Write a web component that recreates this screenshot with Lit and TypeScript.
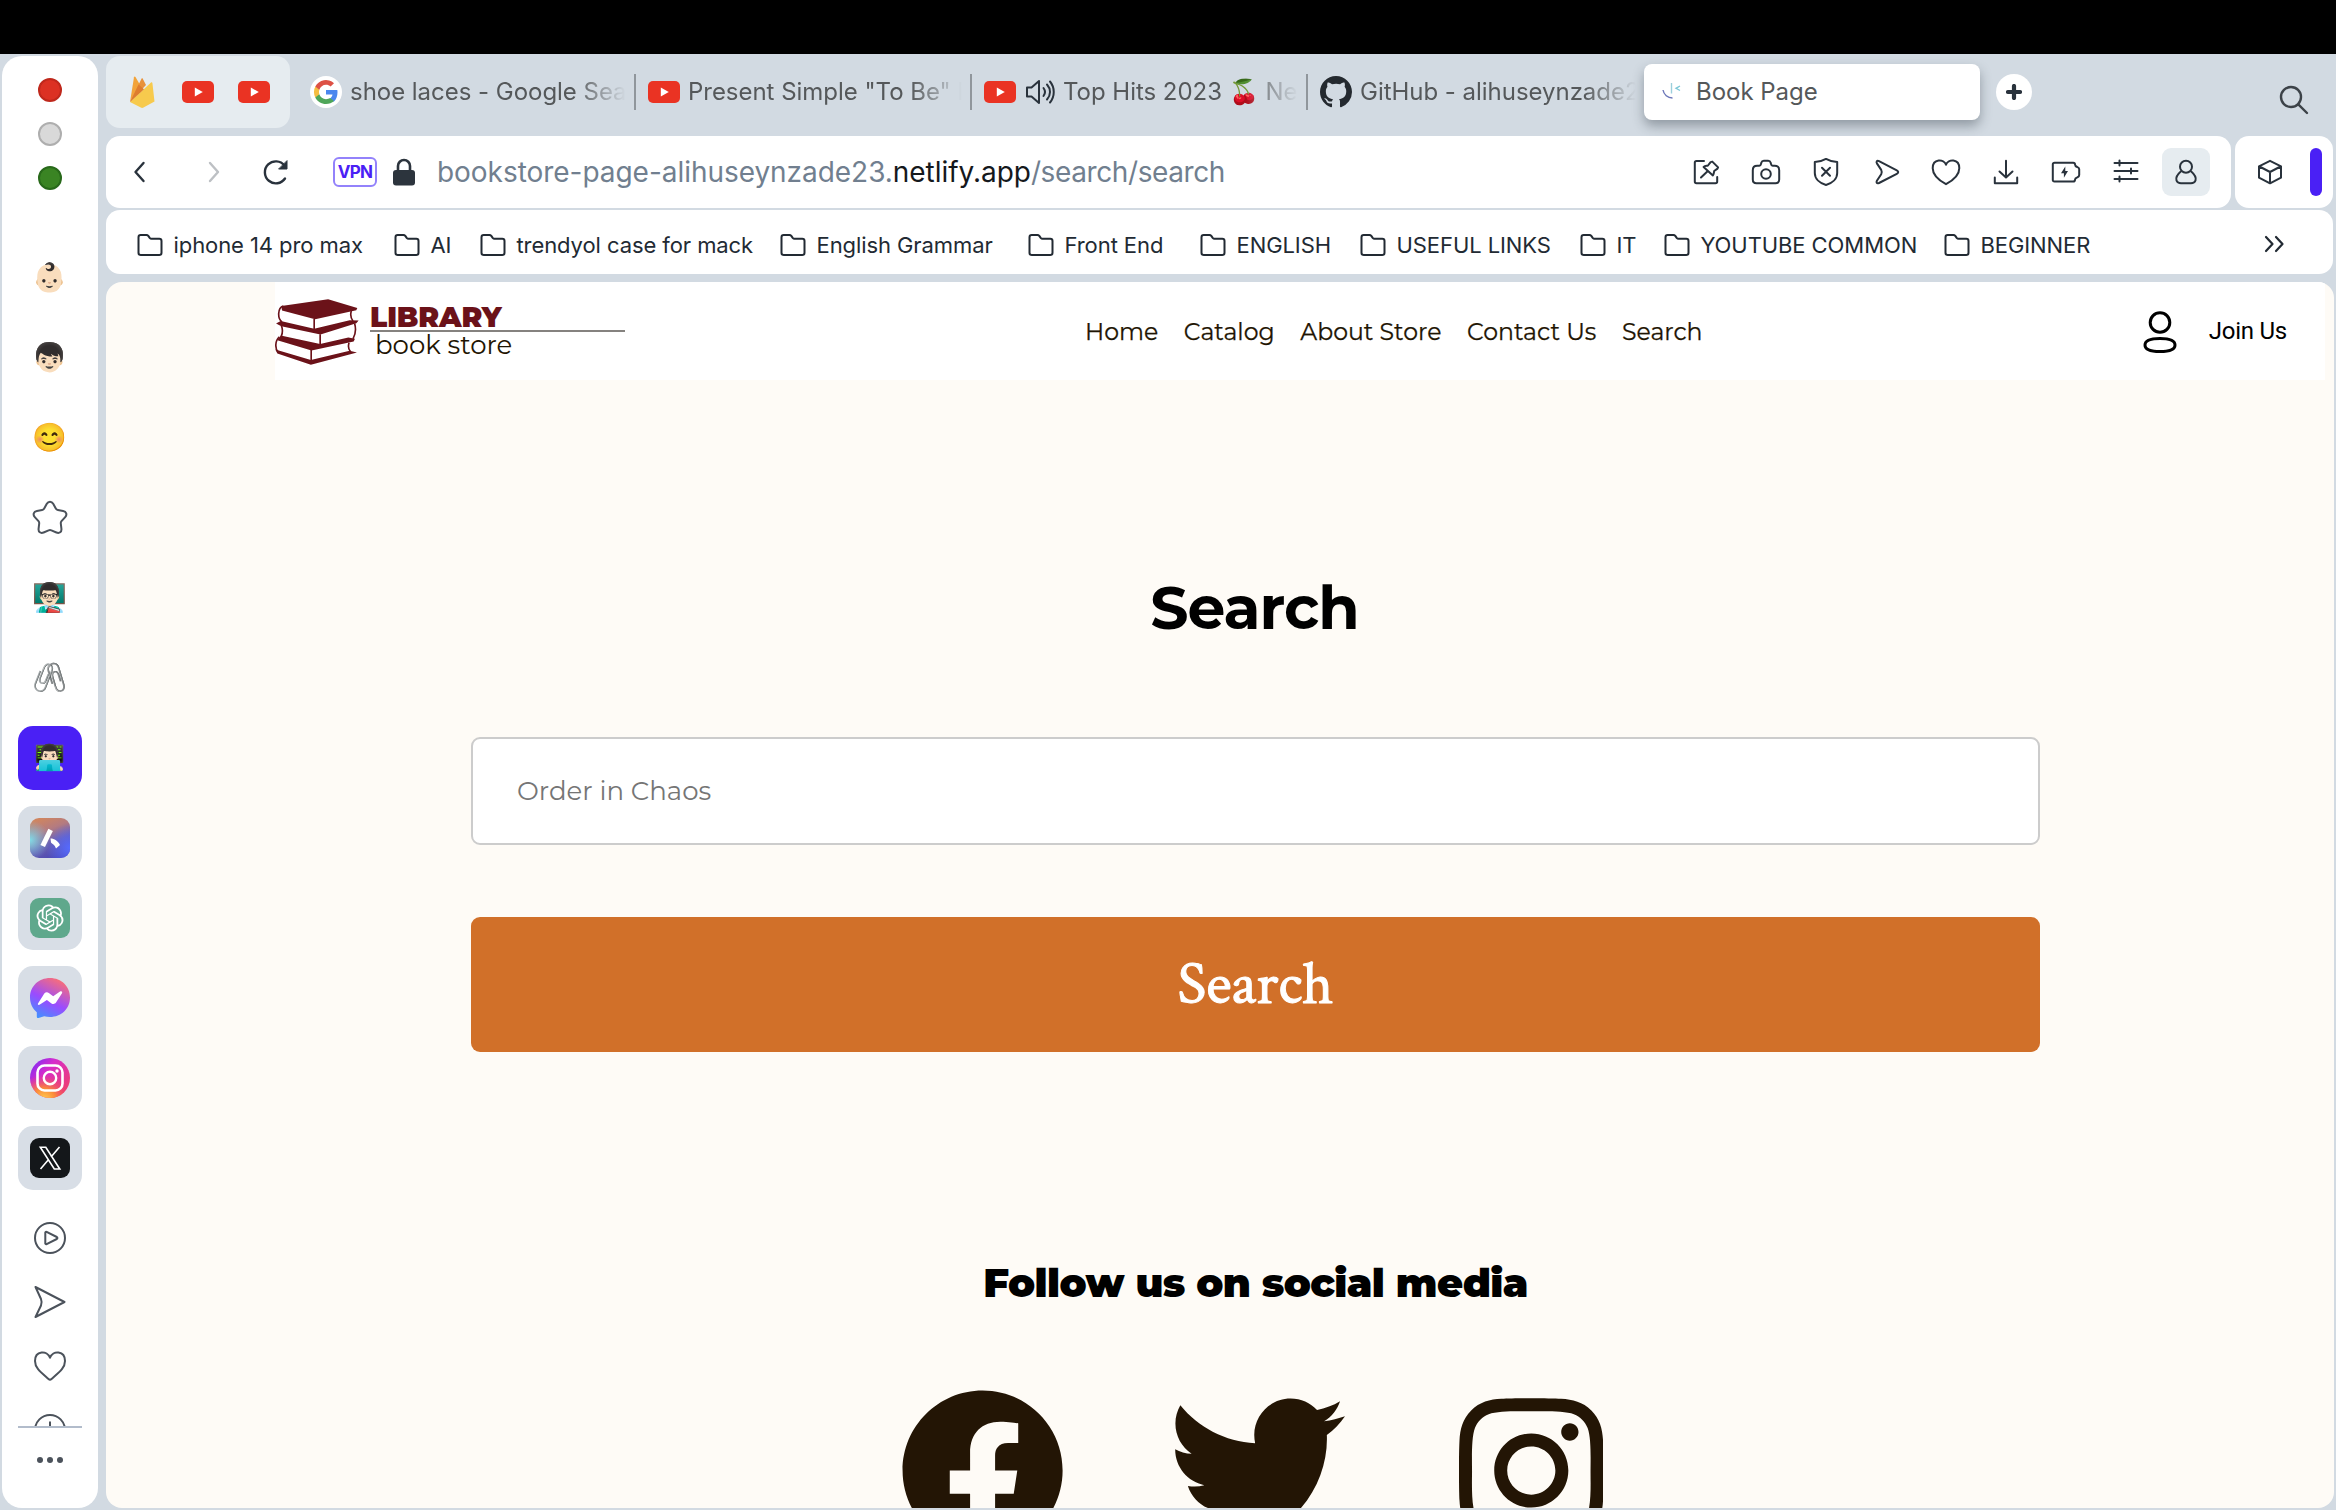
import { LitElement, html, css, svg } from 'lit';
import { customElement } from 'lit/decorators.js';
import { styleMap } from 'lit/directives/style-map.js';

const youtube = html`<svg class="yt" width="32" height="22" viewBox="0 0 32 22">
  <rect width="32" height="22" rx="5" fill="#ea3323" /><path d="M12.8 6.4v9.2L20.8 11z" fill="#fff" />
</svg>`;

const firebase = html`<svg width="26" height="32" viewBox="0 0 26 32">
  <path d="M1 26 5 1.2c.2-.9 1-.9 1.500-.2L10.500 8z" fill="#f2a33a" />
  <path d="M1 26 12.500 2.700c.3-.6 1-.6 1.300 0L17 9z" fill="#e8913a" />
  <path d="M1 26 22 6.600c.5-.5 1.300-.2 1.400.5L25.500 25.500 14.500 31.500c-.9.5-1.800.5-2.700 0z" fill="#f7ca4d" />
  <path d="M1 26 9.600 8.400 15 13.200z" fill="#de7c2e" />
</svg>`;

const google = html`<svg width="32" height="32" viewBox="0 0 32 32">
  <circle cx="16" cy="16" r="16" fill="#fff" />
  <g transform="translate(4 4)">
    <path d="M23.500 12.300c0-.9-.1-1.500-.2-2.300H12v4.500h6.500c-.3 1.600-1.200 3-2.500 3.900v3.200h4c2.300-2.200 3.500-5.400 3.500-9.300z" fill="#4b87ee" />
    <path d="M12 24c3.200 0 6-1.100 8-2.900l-4-3.100c-1 .7-2.400 1.200-4 1.200-3.100 0-5.700-2.100-6.700-4.900H1.300v3.100C3.300 21.300 7.300 24 12 24z" fill="#4fa65a" />
    <path d="M5.300 14.300a7.200 7.200 0 0 1 0-4.600V6.600H1.300a12 12 0 0 0 0 10.800z" fill="#f5bd42" />
    <path d="M12 4.800c1.800 0 3.300.6 4.600 1.800L20 3.200A12 12 0 0 0 1.300 6.600l4 3.100C6.300 6.900 8.900 4.800 12 4.800z" fill="#dd5145" />
  </g>
</svg>`;

const github = html`<svg width="32" height="32" viewBox="0 0 16 16" fill="#24292f">
  <path d="M8 0C3.580 0 0 3.580 0 8c0 3.540 2.290 6.530 5.470 7.590.4.070.55-.17.55-.38 0-.19-.01-.82-.01-1.490-2.010.37-2.530-.49-2.690-.94-.09-.23-.48-.94-.82-1.130-.28-.15-.68-.52-.01-.53.63-.01 1.080.58 1.230.82.72 1.210 1.870.87 2.330.66.07-.52.28-.87.51-1.070-1.780-.2-3.640-.89-3.640-3.950 0-.87.31-1.590.82-2.150-.08-.2-.36-1.020.08-2.120 0 0 .67-.21 2.200.82.64-.18 1.320-.27 2-.27s1.360.09 2 .27c1.530-1.040 2.200-.82 2.200-.82.44 1.100.16 1.920.08 2.120.51.56.82 1.270.82 2.150 0 3.070-1.870 3.750-3.650 3.950.29.25.54.73.54 1.480 0 1.070-.01 1.930-.01 2.200 0 .21.15.46.55.38A8.010 8.010 0 0 0 16 8c0-4.420-3.580-8-8-8z" />
</svg>`;

const speaker = html`<svg width="30" height="26" viewBox="0 0 30 26" fill="none" stroke="#29323c" stroke-width="2" stroke-linecap="round" stroke-linejoin="round">
  <path d="M2 8.500h4.500L14 2v22l-7.500-6.500H2zM18.500 9c1.800 2.400 1.800 5.600 0 8M22 5.500c4 4.500 4 10.500 0 15" /><path d="M25 2.500c5 6 5 15 0 21" />
</svg>`;

const favicon = html`<svg width="20" height="20" viewBox="0 0 20 20" fill="none" stroke-width="1.400">
  <path d="M1 8c.8 4.500 4.600 8 9.500 8" stroke="#6a75b8" /><path d="M9.500 1v10.500" stroke="#9ccfdc" /><path d="M18 4l-4 2.300 4 2.200" stroke="#7cc7d6" />
</svg>`;

const glyphs: Record<string, unknown> = {
  pin: svg`<path d="M14 4.900H6.500c-1 0-1.700.7-1.700 1.700v19c0 1 .7 1.700 1.700 1.700h19c1 0 1.700-.7 1.700-1.700V21M22.300 5.600l5.800 5.800-.6 1.200-3.300 2.400c-.4 1.700-.2 3-1.300 4.400L13.600 10.900c1.300-1.200 2.700-1 4.400-1.400l2.600-3.400zM17.300 15.500 11 21.500" />`,
  camera: svg`<path d="M9.300 9.800c1.800 0 1.500-1.300 2-3 .4-1.300 1.200-2 2.500-2h4.400c1.300 0 2.100.7 2.500 2 .5 1.700.2 3 2 3h2.100c2.700 0 4.400 1.700 4.400 4.400v9.300c0 2.300-1.300 3.800-3.600 3.800H6.400c-2.300 0-3.600-1.500-3.600-3.800v-9.300c0-2.700 1.700-4.400 4.400-4.400z" /><circle cx="16" cy="18" r="4.800" />`,
  shield: svg`<path d="M16 2.900c3.500 2 7 3 11.200 3.200v11c0 5.500-4.500 10-11.200 11.900-6.700-1.900-11.200-6.400-11.200-11.900v-11C9 5.900 12.500 4.900 16 2.900zM12 11.700l8 8M20 11.700l-8 8" />`,
  send: svg`<path d="M9 5.200 26.800 14.300c1.900 1 1.900 2.500 0 3.500L9 27c-2.200 1-3-.5-2.100-2.200l4.300-6.600c.8-1.500.8-2.800 0-4.300L6.900 7.400C6 5.700 6.800 4.200 9 5.200z" />`,
  heart: svg`<path d="M16 8.800c2-6.200 13.300-6.200 13.300 3.400 0 6.300-4.800 11.300-13.300 16C7.500 23.500 2.700 18.500 2.700 12.200 2.700 2.600 14 2.600 16 8.800z" />`,
  download: svg`<path d="M16 4.800v16.500M9.500 15.500 16 21.500l6.500-6M4.800 21.500v5.800h22.400v-5.800" />`,
  battery: svg`<path d="M4.500 6.800h18.700c1.200 0 1.800.7 1.800 1.800 0 1.700.8 1.900 2.500 2.500 1.200.4 1.700 1 1.700 2.200v5.800c0 1.200-.5 1.800-1.700 2.200-1.700.6-2.500.8-2.500 2.500 0 1.100-.6 1.800-1.800 1.800H4.500c-1.100 0-1.700-.6-1.700-1.700V8.500c0-1.100.6-1.700 1.700-1.700z" /><path d="M15.300 10.500 11 17.300h2.900v4.400L18 15h-2.700z" fill="#29323c" stroke="none" />`,
  sliders: svg`<path d="M4.500 7h23M4.500 15h23M4.500 23h23M9.500 4.500v5M21 12.500v5M9.500 20.500v5" />`,
  person: svg`<circle cx="16" cy="10.700" r="6" /><path d="M10.800 15.500c-3.500 3-5.300 6-4.300 9 .7 2 2.300 2.800 4.500 2.800h10c2.200 0 3.800-.8 4.500-2.800 1-3-.8-6-4.300-9" />`,
  cube: svg`<path d="M16 4.800 27 10.300v11.400L16 27.300 5 21.700V10.300zM5.500 10.500 16 16l10.500-5.500M16 16v11" />`,
};

const icon = (name: string, size = 32) => html`<svg width=${size} height=${size} viewBox="0 0 32 32" fill="none"
  stroke="#29323c" stroke-width="2" stroke-linecap="round" stroke-linejoin="round">${glyphs[name]}</svg>`;

const bookmarks: { label: string; width: number }[] = [
  { label: 'iphone 14 pro max', width: 257 },
  { label: 'AI', width: 86 },
  { label: 'trendyol case for mack', width: 300 },
  { label: 'English Grammar', width: 248 },
  { label: 'Front End', width: 172 },
  { label: 'ENGLISH', width: 160 },
  { label: 'USEFUL LINKS', width: 220 },
  { label: 'IT', width: 84 },
  { label: 'YOUTUBE COMMON', width: 280 },
  { label: 'BEGINNER', width: 160 },
];

@customElement('side-bar')
class SideBar extends LitElement {
  static styles = css`
    :host { display: flex; flex-direction: column; align-items: center; width: 96px; height: 1452px; background: #fff; border-radius: 20px; overflow: hidden; box-sizing: border-box; }
    .lights { display: flex; flex-direction: column; gap: 20px; padding: 22px 0 48px; }
    .light { width: 24px; height: 24px; box-sizing: border-box; border-radius: 50%; border: 2px solid; }
    .red { background: #dc3123; border-color: #bf281c; }
    .gray { background: #d9d9d9; border-color: #aeaeae; }
    .green { background: #3a8423; border-color: #28691a; }
    .row { height: 80px; display: flex; align-items: center; justify-content: center; font: 28px/32px "Noto Color Emoji", sans-serif; }
    .paper { filter: grayscale(.9) brightness(.85); }
    .tile { width: 64px; height: 64px; border-radius: 15px; display: flex; align-items: center; justify-content: center; }
    .active { background: #4a20f5; font-size: 25px; }
    .app { background: #d8dee6; }
    .tools { display: flex; flex: none; flex-direction: column; align-items: center; width: 64px; height: 230px; padding-top: 8px; box-sizing: border-box; overflow: hidden; border-bottom: 2px solid #b2bccb; }
    .tool { height: 64px; flex: none; display: flex; align-items: center; }
    .dots { display: flex; gap: 4px; margin-top: 29px; }
    .dot { width: 6px; height: 6px; border-radius: 50%; background: #4b525b; }
    svg { display: block; }
  `;

  render() {
    return html`
      <div class="lights"><i class="light red"></i><i class="light gray"></i><i class="light green"></i></div>
      <div class="row">👶🏻</div>
      <div class="row">👦🏻</div>
      <div class="row">😊</div>
      <div class="row">
        <svg width="36" height="36" viewBox="0 0 36 36" fill="none" stroke="#4b525b" stroke-width="2" stroke-linejoin="round">
          <path d="M14.800 3.800c1.500-2.700 4.900-2.700 6.400 0l2.600 4.700c.5.900 1.100 1.300 2.100 1.500l5.200 1c3.300.6 4.300 3.600 2.100 6.100l-3.700 4.100c-.6.700-.8 1.400-.7 2.300l.6 5.100c.4 3.500-2 5.100-5 3.900l-5-2.100c-1-.4-1.800-.4-2.800 0l-5 2.100c-3 1.200-5.400-.4-5-3.900l.6-5.100c.1-.9-.1-1.600-.7-2.300l-3.700-4.100C.6 14.600 1.600 11.600 4.900 11l5.200-1c1-.2 1.600-.6 2.100-1.500z" />
        </svg>
      </div>
      <div class="row">👨🏻‍🏫</div>
      <div class="row paper">🖇️</div>
      <div class="row"><div class="tile active">👨🏻‍💻</div></div>
      <div class="row"><div class="tile app">
        <svg width="40" height="40" viewBox="0 0 40 40">
          <defs>
            <linearGradient id="a" x1=".3" y1="0" x2=".7" y2="1"><stop offset="0" stop-color="#cf8560" /><stop offset=".3" stop-color="#b47b80" /><stop offset=".62" stop-color="#6a5fae" /><stop offset="1" stop-color="#4a46b4" /></linearGradient>
            <radialGradient id="b" cx="0" cy=".55" r=".5"><stop offset="0" stop-color="#80dbe6" /><stop offset="1" stop-color="#80c0e6" stop-opacity="0" /></radialGradient>
            <radialGradient id="c" cx="1" cy=".75" r=".6"><stop offset="0" stop-color="#566bff" /><stop offset="1" stop-color="#566bff" stop-opacity="0" /></radialGradient>
          </defs>
          <rect width="40" height="40" rx="9" fill="url(#a)" /><rect width="40" height="40" rx="9" fill="url(#b)" /><rect width="40" height="40" rx="9" fill="url(#c)" />
          <path d="M12.700 28 20.600 11.800" stroke="#fff" stroke-width="5" />
          <path d="M20.500 20.500c4 0 7.500 2.500 9.500 6.500l-4 3.500c-1.200-4-4-4.500-5-6z" fill="#fff" />
        </svg>
      </div></div>
      <div class="row"><div class="tile app">
        <svg width="40" height="40" viewBox="0 0 40 40">
          <rect width="40" height="40" rx="9" fill="#5fa88c" />
          <path transform="translate(6.500 6.500) scale(1.125)" fill="#fff" d="M22.282 9.821a5.985 5.985 0 0 0-.516-4.910 6.046 6.046 0 0 0-6.510-2.900A6.065 6.065 0 0 0 4.981 4.182a5.985 5.985 0 0 0-3.998 2.900 6.046 6.046 0 0 0 .743 7.097 5.980 5.980 0 0 0 .511 4.911 6.051 6.051 0 0 0 6.515 2.900A5.985 5.985 0 0 0 13.260 24a6.056 6.056 0 0 0 5.772-4.206 5.990 5.990 0 0 0 3.998-2.900 6.056 6.056 0 0 0-.748-7.073zM13.260 22.430a4.476 4.476 0 0 1-2.876-1.041l.141-.080 4.779-2.759a.795.795 0 0 0 .393-.681v-6.737l2.020 1.169a.071.071 0 0 1 .038.052v5.583a4.504 4.504 0 0 1-4.495 4.494zM3.600 18.304a4.471 4.471 0 0 1-.535-3.014l.142.085 4.783 2.759a.771.771 0 0 0 .781 0l5.843-3.369v2.332a.080.080 0 0 1-.033.062L9.740 19.950a4.500 4.500 0 0 1-6.140-1.646zM2.341 7.896a4.485 4.485 0 0 1 2.366-1.973V11.600a.766.766 0 0 0 .388.677l5.815 3.354-2.020 1.169a.076.076 0 0 1-.071 0l-4.830-2.787A4.504 4.504 0 0 1 2.341 7.872zm16.597 3.855-5.833-3.387L15.119 7.200a.076.076 0 0 1 .071 0l4.830 2.791a4.494 4.494 0 0 1-.676 8.105v-5.678a.790.790 0 0 0-.407-.667zm2.010-3.023-.141-.085-4.774-2.782a.776.776 0 0 0-.785 0L9.409 9.230V6.897a.066.066 0 0 1 .028-.061l4.830-2.787a4.499 4.499 0 0 1 6.680 4.660zM8.307 12.863l-2.020-1.164a.080.080 0 0 1-.038-.057V6.074a4.499 4.499 0 0 1 7.375-3.453l-.142.080-4.778 2.758a.795.795 0 0 0-.393.682zm1.097-2.366 2.602-1.500 2.607 1.500v2.999l-2.597 1.500-2.607-1.500z" />
        </svg>
      </div></div>
      <div class="row"><div class="tile app">
        <svg width="40" height="40" viewBox="0 0 40 40">
          <defs><linearGradient id="m" x1=".2" y1="1" x2=".7" y2="0"><stop offset="0" stop-color="#3f93ff" /><stop offset=".45" stop-color="#9a4bff" /><stop offset="1" stop-color="#fb6f75" /></linearGradient></defs>
          <path d="M20 0c11.300 0 20 8.400 20 19.500S31.300 39 20 39c-2 0-4-.3-5.800-.8L8.500 40c-1 .3-1.700-.2-1.700-1.200v-4.600C2.400 30.500 0 25.500 0 19.500 0 8.400 8.700 0 20 0z" fill="url(#m)" />
          <path d="M8 25.500 14.300 15.600c1.200-1.600 3-1.800 4.500-.7l4.400 3.300 6.800-4.600c1.300-.8 2.800 0 2 1.600L26 24.600c-1.200 1.600-3 1.900-4.500.8l-4.600-3.400-7 4.600c-1.300.7-2.500.2-1.900-1.100z" fill="#fff" />
        </svg>
      </div></div>
      <div class="row"><div class="tile app">
        <svg width="40" height="40" viewBox="0 0 40 40">
          <defs>
            <linearGradient id="i" x1="0" y1="0" x2="1" y2=".8"><stop offset="0" stop-color="#6a2cff" /><stop offset=".4" stop-color="#d62ccc" /><stop offset="1" stop-color="#f0406a" /></linearGradient>
            <radialGradient id="j" cx=".35" cy="1.050" r=".65"><stop offset="0" stop-color="#ffd34f" /><stop offset=".45" stop-color="#fb8a3a" /><stop offset="1" stop-color="#f0406a" stop-opacity="0" /></radialGradient>
          </defs>
          <circle cx="20" cy="20" r="20" fill="url(#i)" /><circle cx="20" cy="20" r="20" fill="url(#j)" />
          <rect x="7.500" y="7.500" width="25" height="25" rx="7" fill="none" stroke="#fff" stroke-width="2.600" />
          <circle cx="20" cy="20" r="6.200" fill="none" stroke="#fff" stroke-width="2.400" /><circle cx="27" cy="13" r="1.700" fill="#fff" />
        </svg>
      </div></div>
      <div class="row"><div class="tile app">
        <svg width="40" height="40" viewBox="0 0 40 40">
          <rect width="40" height="40" rx="9" fill="#14171a" />
          <path d="M10.300 9.300h5.500l14 21.700h-5.500zM29.500 9 21 19M18.600 21.600 10.500 31" fill="none" stroke="#fff" stroke-width="1.600" />
        </svg>
      </div></div>
      <div class="tools">
        <div class="tool">
          <svg width="34" height="34" viewBox="0 0 34 34" fill="none" stroke="#4b525b" stroke-width="2" stroke-linejoin="round"><circle cx="17" cy="17" r="15" /><path d="M12.300 11.500v11c.2.700.7.900 1.300.6l10.200-5.100c.8-.6.8-1.400 0-2l-10.200-5.100c-.6-.300-1.100-.1-1.300.6z" /></svg>
        </div>
        <div class="tool">
          <svg width="34" height="34" viewBox="0 0 34 34" fill="none" stroke="#4b525b" stroke-width="2" stroke-linejoin="round"><path d="M2.500 2 31.500 17 2.500 32 8 20.500c.8-2 .8-4.500 0-6.500z" /></svg>
        </div>
        <div class="tool">
          <svg width="34" height="34" viewBox="0 0 34 34" fill="none" stroke="#4b525b" stroke-width="2" stroke-linejoin="round"><path d="M17 8.800C19.500 1 32 1.500 32 12c0 7-5.500 11-13.500 18-1 .9-2 .9-3 0C7.500 23 2 19 2 12 2 1.500 14.500 1 17 8.800z" /></svg>
        </div>
        <div class="tool">
          <svg width="34" height="34" viewBox="0 0 34 34" fill="none" stroke="#4b525b" stroke-width="2"><circle cx="17" cy="17" r="15" /><path d="M17 8.500V18" /></svg>
        </div>
      </div>
      <div class="dots"><i class="dot"></i><i class="dot"></i><i class="dot"></i></div>
    `;
  }
}

@customElement('tab-strip')
class TabStrip extends LitElement {
  static styles = css`
    :host { display: flex; align-items: flex-start; height: 82px; padding-top: 2px; box-sizing: border-box; font: 24px/36px Inter, "Liberation Sans", sans-serif; color: #55585a; letter-spacing: -.03px; }
    svg { display: block; flex: none; }
    .pinned { display: flex; align-items: center; gap: 24px; width: 184px; height: 72px; box-sizing: border-box; padding: 0 20px 0 23px; border-radius: 14px; background: #e6ecf0; }
    .pinned svg:first-child { margin-right: 3px; }
    .tab { display: flex; align-items: center; width: 336px; height: 36px; margin-top: 18px; box-sizing: border-box; border-right: 2px solid #90969c; padding-left: 12px; }
    .tab.first { width: 346px; padding-left: 20px; }
    .tab.last { width: 336px; border: 0; }
    .title { flex: 1; white-space: nowrap; overflow: hidden; margin: 0 8px 0 8px; -webkit-mask-image: linear-gradient(to right, #000 calc(100% - 52px), transparent); mask-image: linear-gradient(to right, #000 calc(100% - 52px), transparent); }
    .current { display: flex; align-items: center; gap: 14px; width: 336px; height: 56px; margin-top: 8px; box-sizing: border-box; padding-left: 18px; border-radius: 8px; background: #fff; box-shadow: 0 6px 12px rgba(40, 50, 60, .38); }
    .add { width: 36px; height: 36px; border-radius: 50%; background: #fff; margin: 18px 0 0 16px; display: grid; place-items: center; }
    .find { margin: 28px 24px 0 auto; }
    .audio { margin-left: 9px; }
  `;

  render() {
    return html`
      <div class="pinned">${firebase}${youtube}${youtube}</div>
      <div class="tab first">${google}<span class="title">shoe laces - Google Sea</span></div>
      <div class="tab">${youtube}<span class="title">Present Simple "To Be" N</span></div>
      <div class="tab">${youtube}<span class="audio">${speaker}</span><span class="title">Top Hits 2023 🍒 Ne</span></div>
      <div class="tab last">${github}<span class="title">GitHub - alihuseynzade2</span></div>
      <div class="current">${favicon}<span>Book Page</span></div>
      <div class="add"><svg width="16" height="16" viewBox="0 0 16 16" stroke="#29323c" stroke-width="4.200" stroke-linecap="round"><path d="M8 2v12M2 8h12" /></svg></div>
      <svg class="find" width="32" height="32" viewBox="0 0 32 32" fill="none" stroke="#3c4248" stroke-width="2.400" stroke-linecap="round"><circle cx="13" cy="13" r="10" /><path d="M20.300 20.300 29 29" /></svg>
    `;
  }
}

@customElement('address-bar')
class AddressBar extends LitElement {
  static styles = css`
    :host { display: flex; gap: 4px; height: 72px; }
    svg { display: block; flex: none; }
    .bar { display: flex; align-items: center; width: 2125px; box-sizing: border-box; padding: 0 21px 0 18px; background: #fff; border-radius: 14px; }
    .side { display: flex; align-items: center; flex: 1; background: #fff; border-radius: 14px; padding-left: 19px; gap: 24px; }
    .accent { width: 12px; height: 48px; border-radius: 6px; background: #4a20f5; }
    .nav { display: flex; gap: 36px; }
    .vpn { margin-left: 41px; width: 44px; height: 30px; box-sizing: border-box; border: 2px solid #9382fb; border-radius: 6px; text-align: center; font: 700 17px/27px Inter, "Liberation Sans", sans-serif; color: #4a20f5; letter-spacing: -.7px; }
    .lock { margin: 0 21px 0 15px; }
    .url { font: 28px/36px Inter, "Liberation Sans", sans-serif; color: #717f8f; white-space: nowrap; letter-spacing: -.04px; }
    .host { color: #15181c; }
    .path { letter-spacing: -.4px; }
    .actions { display: flex; align-items: center; gap: 28px; margin-left: auto; }
    .profile { display: grid; place-items: center; width: 48px; height: 48px; border-radius: 9px; background: #e6ecf0; margin-left: -8px; }
  `;

  render() {
    return html`
      <div class="bar">
        <div class="nav">
          <svg width="32" height="32" viewBox="0 0 32 32" fill="none" stroke="#29323c" stroke-width="2.400" stroke-linecap="round" stroke-linejoin="round"><path d="M19.500 7 11.500 16l8 9" /></svg>
          <svg width="32" height="32" viewBox="0 0 32 32" fill="none" stroke="#bdc0c4" stroke-width="2.400" stroke-linecap="round" stroke-linejoin="round"><path d="M18 7l8 9-8 9" /></svg>
          <svg width="32" height="32" viewBox="0 0 32 32" fill="none" stroke="#29323c" stroke-width="2.400" stroke-linecap="round" stroke-linejoin="round"><path d="M25 21.500A11 11 0 1 1 24.500 8.500" transform="translate(0 1)" /><path d="M27 5v8h-8z" fill="#29323c" stroke-width="1" /></svg>
        </div>
        <span class="vpn">VPN</span>
        <svg class="lock" width="24" height="28" viewBox="0 0 24 28"><path d="M6 13V8a6 6 0 0 1 12 0v5" fill="none" stroke="#2c343d" stroke-width="2.600" /><rect x="1" y="12" width="22" height="15.500" rx="3" fill="#2c343d" /></svg>
        <span class="url">bookstore-page-alihuseynzade23.<span class="host">netlify.app</span><span class="path">/search/search</span></span>
        <div class="actions">
          ${['pin', 'camera', 'shield', 'send', 'heart', 'download', 'battery', 'sliders'].map((n) => icon(n))}
          <span class="profile">${icon('person')}</span>
        </div>
      </div>
      <div class="side">${icon('cube')}<i class="accent"></i></div>
    `;
  }
}

@customElement('bookmark-bar')
class BookmarkBar extends LitElement {
  static styles = css`
    :host { display: flex; align-items: center; height: 64px; box-sizing: border-box; padding: 0 47px 0 31px; background: #fff; border-radius: 14px; font: 22px/30px Inter, "Liberation Sans", sans-serif; color: #222a33; letter-spacing: -.08px; }
    .item { display: flex; align-items: center; gap: 10.500px; flex: none; white-space: nowrap; padding-top: 5px; box-sizing: border-box; }
    .more { margin: 4px 0 0 auto; }
    svg { display: block; flex: none; }
  `;

  render() {
    return html`
      ${bookmarks.map((b) => html`
        <div class="item" style=${styleMap({ width: `${b.width}px` })}>
          <svg width="26" height="24" viewBox="0 0 26 24" fill="none" stroke="#222a33" stroke-width="2" stroke-linejoin="round"><path d="M1.500 4.200c0-1.400.8-2.200 2.200-2.200h5.800c.8 0 1.300.3 1.800.9l1.400 2c.5.6 1 .9 1.800.9h7.800c1.400 0 2.200.8 2.200 2.200v11.800c0 1.400-.8 2.200-2.200 2.200H3.700c-1.400 0-2.200-.8-2.200-2.200z" /></svg>
          <span>${b.label}</span>
        </div>`)}
      <svg class="more" width="22" height="18" viewBox="0 0 22 18" fill="none" stroke="#222a33" stroke-width="2.200" stroke-linecap="round" stroke-linejoin="round"><path d="M2 2l6.500 7L2 16M12 2l6.500 7L12 16" /></svg>
    `;
  }
}

@customElement('store-page')
class StorePage extends LitElement {
  static styles = css`
    :host { display: block; height: 1226px; overflow: hidden; background: #fefbf6; border-radius: 16px; font-family: Montserrat, Inter, sans-serif; color: #000; }
    svg { display: block; flex: none; }
    header { display: flex; margin: 0 9px 0 169px; height: 98px; background: #fff; }
    .logo { display: flex; width: 350px; }
    .books { margin-top: 17px; }
    .brand { margin: 20px 0 0 11px; width: 255px; color: #1f1503; }
    .name { display: block; height: 28px; border-bottom: 2px solid #85827f; font-weight: 900; font-size: 28px; line-height: 30px; color: #6b1219; letter-spacing: -.15px; }
    .kind { display: block; padding-left: 5px; font-size: 26px; line-height: 27px; letter-spacing: -.02px; }
    nav { display: flex; align-items: center; gap: 25.600px; margin-left: 460px; font-size: 23.600px; color: #1f1503; -webkit-text-stroke: .25px #1f1503; }
    .join { display: flex; align-items: center; gap: 31px; margin: 0 38px 0 auto; font: 24px/28px Roboto, sans-serif; letter-spacing: -.25px; }
    .user { margin-top: 2px; }
    main { padding: 198px 294px 0 365px; text-align: center; }
    h1, h2 { margin: 0; }
    h1 { font-size: 60px; line-height: 60px; font-weight: 700; letter-spacing: -1px; text-indent: -2px; }
    .field { display: block; width: 100%; height: 108px; margin: 99px 0 72px; box-sizing: border-box; padding: 0 44px; border: 2px solid #ccc; border-radius: 9px; background: #fff; outline: 0; font: 26px Montserrat, Inter, sans-serif; }
    .field::placeholder { color: #757575; opacity: 1; }
    .submit { display: block; width: 100%; height: 135px; padding: 0; border: 0; border-radius: 9px; background: #d17029; color: #fff; font: 500 60px "Crimson Text", "Crimson Pro", "Liberation Serif", serif; -webkit-text-stroke: 1px #fff; }
    h2 { margin-top: 210px; font-size: 40px; line-height: 41px; height: 40px; font-weight: 900; letter-spacing: -.57px; }
    .social { display: flex; align-items: center; height: 177px; margin-top: 80px; padding-left: 429px; }
    .tw { margin: 0 113.500px 0 103px; }
  `;

  render() {
    return html`
      <header>
        <div class="logo">
          <svg class="books" width="84" height="66" viewBox="45 86 253 199" fill="none" stroke="#6b1219" stroke-width="5">
            <g fill="#6b1219" stroke="none">
              <path d="M64 107 205 87 293 113 290 120 166 147 66 121z" />
              <path d="M48 160 62 152 163 176 270 150 297 151 290 159 182 193 64 168z" />
              <path d="M62 196 181 222 266 202 286 206 282 214 155 241 52 210z" />
              <path d="M46 238 153 270 270 242 292 247 153 284 52 250z" />
            </g>
            <path d="M70 107C52 112 52 146 66 155M163 146v31M275 122c-4 12-1 22 5 30M64 166c5 12 4 22 0 32M181 192v30M285 160c5 18 2 34-5 46M58 200C44 212 45 236 54 246M154 240v30M268 218c-3 10-1 20 4 26" />
          </svg>
          <div class="brand"><span class="name">LIBRARY</span><span class="kind">book store</span></div>
        </div>
        <nav><span>Home</span><span>Catalog</span><span>About Store</span><span>Contact Us</span><span>Search</span></nav>
        <div class="join">
          <svg class="user" width="36" height="44" viewBox="0 0 36 44" fill="none" stroke="#000" stroke-width="3"><circle cx="18" cy="12.500" r="9.800" /><path d="M18 28.500c9 0 15 2.200 15 6.500s-6 6.500-15 6.500S3 39.300 3 35s6-6.500 15-6.500z" /></svg>
          <span>Join Us</span>
        </div>
      </header>
      <main>
        <h1>Search</h1>
        <input class="field" placeholder="Order in Chaos" />
        <button class="submit">Search</button>
        <h2>Follow us on social media</h2>
        <div class="social">
          <svg width="165.200" height="165.200" viewBox="0 0 512 512" fill="#231505"><path d="M504 256C504 119 393 8 256 8S8 119 8 256c0 123.780 90.690 226.380 209.250 245V327.690h-63V256h63v-54.640c0-62.150 37-96.480 93.670-96.480 27.140 0 55.520 4.840 55.520 4.840v61h-31.280c-30.800 0-40.410 19.120-40.410 38.730V256h68.780l-11 71.690h-57.780V501C413.310 482.380 504 379.780 504 256z" /></svg>
          <svg class="tw" width="177" height="177" viewBox="0 0 512 512" fill="#231505"><path d="M459.370 151.716c.325 4.548.325 9.097.325 13.645 0 138.720-105.583 298.558-298.558 298.558-59.452 0-114.680-17.219-161.137-47.106 8.447.974 16.568 1.299 25.340 1.299 49.055 0 94.213-16.568 130.274-44.832-46.132-.975-84.792-31.188-98.112-72.772 6.498.974 12.995 1.624 19.818 1.624 9.421 0 18.843-1.300 27.614-3.573-48.081-9.747-84.143-51.980-84.143-102.985v-1.299c13.969 7.797 30.214 12.670 47.431 13.319-28.264-18.843-46.781-51.005-46.781-87.391 0-19.492 5.197-37.360 14.294-52.954 51.655 63.675 129.300 105.258 216.365 109.807-1.624-7.797-2.599-15.918-2.599-24.040 0-57.828 46.782-104.934 104.934-104.934 30.213 0 57.502 12.670 76.670 33.137 23.715-4.548 46.456-13.320 66.599-25.340-7.798 24.366-24.366 44.833-46.132 57.827 21.117-2.273 41.584-8.122 60.426-14.294-14.294 20.791-32.161 39.308-52.628 54.253z" /></svg>
          <svg width="144.500" height="165.200" viewBox="0 0 448 512" fill="#231505"><path d="M224.100 141c-63.600 0-114.900 51.300-114.900 114.900s51.300 114.900 114.900 114.900S339 319.500 339 255.900 287.700 141 224.100 141zm0 189.600c-41.100 0-74.700-33.500-74.700-74.700s33.500-74.700 74.700-74.700 74.700 33.500 74.700 74.700-33.600 74.700-74.700 74.700zm146.400-194.300c0 14.900-12 26.800-26.800 26.800-14.900 0-26.800-12-26.800-26.800s12-26.800 26.800-26.800 26.800 12 26.800 26.800zm76.100 27.200c-1.700-35.900-9.900-67.700-36.200-93.900-26.200-26.200-58-34.400-93.900-36.200-37-2.100-147.900-2.100-184.900 0-35.800 1.700-67.600 9.900-93.900 36.100s-34.400 58-36.200 93.900c-2.100 37-2.100 147.900 0 184.900 1.700 35.900 9.900 67.700 36.200 93.900s58 34.400 93.900 36.200c37 2.100 147.900 2.100 184.900 0 35.900-1.700 67.700-9.900 93.900-36.200 26.200-26.200 34.400-58 36.200-93.900 2.100-37 2.100-147.800 0-184.800zM398.800 388c-7.800 19.600-22.900 34.700-42.600 42.600-29.500 11.700-99.500 9-132.100 9s-102.700 2.600-132.100-9c-19.600-7.800-34.700-22.900-42.600-42.600-11.700-29.500-9-99.500-9-132.100s-2.600-102.700 9-132.100c7.800-19.600 22.900-34.700 42.600-42.600 29.500-11.700 99.500-9 132.100-9s102.700-2.600 132.100 9c19.600 7.800 34.700 22.900 42.600 42.600 11.700 29.500 9 99.500 9 132.100s2.700 102.700-9 132.100z" /></svg>
        </div>
      </main>
    `;
  }
}

@customElement('app-root')
class AppRoot extends LitElement {
  static styles = css`
    :host { display: block; width: 2336px; height: 1510px; box-sizing: border-box; border-top: 54px solid #000; background: #d2dae2; overflow: hidden; }
    .window { display: flex; gap: 8px; padding: 0 2px; }
    side-bar { margin-top: 2px; flex: none; }
    .main { display: flex; flex-direction: column; flex: 1; min-width: 0; }
    bookmark-bar { margin: 2px 1px 8px 0; }
    address-bar { margin-right: 1px; }
  `;

  render() {
    return html`<div class="window">
      <side-bar></side-bar>
      <div class="main">
        <tab-strip></tab-strip>
        <address-bar></address-bar>
        <bookmark-bar></bookmark-bar>
        <store-page></store-page>
      </div>
    </div>`;
  }
}
